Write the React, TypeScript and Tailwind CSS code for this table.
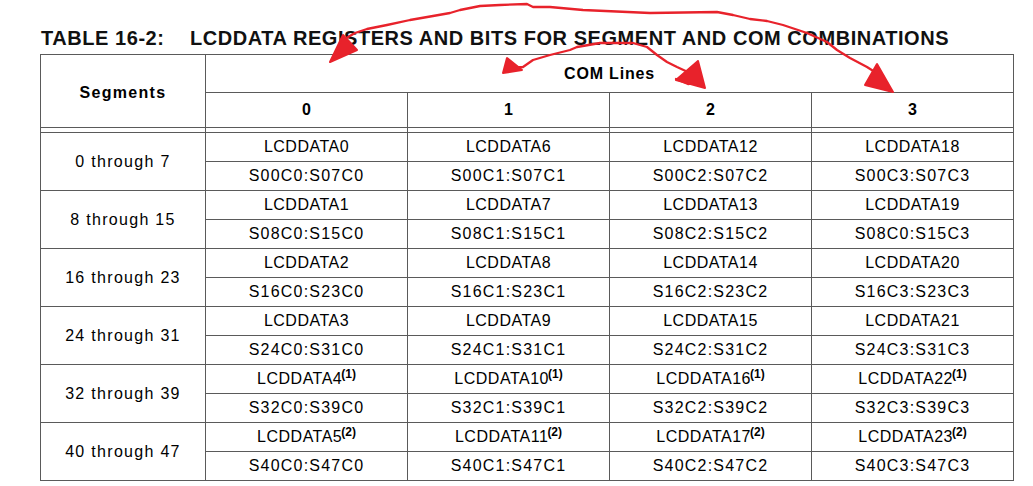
import React from 'react';

const groups = [
  { seg: '0 through 7', regs: ['LCDDATA0', 'LCDDATA6', 'LCDDATA12', 'LCDDATA18'], bits: ['S00C0:S07C0', 'S00C1:S07C1', 'S00C2:S07C2', 'S00C3:S07C3'] },
  { seg: '8 through 15', regs: ['LCDDATA1', 'LCDDATA7', 'LCDDATA13', 'LCDDATA19'], bits: ['S08C0:S15C0', 'S08C1:S15C1', 'S08C2:S15C2', 'S08C0:S15C3'] },
  { seg: '16 through 23', regs: ['LCDDATA2', 'LCDDATA8', 'LCDDATA14', 'LCDDATA20'], bits: ['S16C0:S23C0', 'S16C1:S23C1', 'S16C2:S23C2', 'S16C3:S23C3'] },
  { seg: '24 through 31', regs: ['LCDDATA3', 'LCDDATA9', 'LCDDATA15', 'LCDDATA21'], bits: ['S24C0:S31C0', 'S24C1:S31C1', 'S24C2:S31C2', 'S24C3:S31C3'] },
  { seg: '32 through 39', regs: ['LCDDATA4', 'LCDDATA10', 'LCDDATA16', 'LCDDATA22'], bits: ['S32C0:S39C0', 'S32C1:S39C1', 'S32C2:S39C2', 'S32C3:S39C3'], note: '(1)' },
  { seg: '40 through 47', regs: ['LCDDATA5', 'LCDDATA11', 'LCDDATA17', 'LCDDATA23'], bits: ['S40C0:S47C0', 'S40C1:S47C1', 'S40C2:S47C2', 'S40C3:S47C3'], note: '(2)' },
];

const cell = 'flex items-center justify-center border-b border-[#5a5a5a]';

// hand-drawn red arrows over the table
const Scribbles: React.FC = () => (
  <svg className="pointer-events-none absolute left-0 top-0" width="1033" height="486" viewBox="0 0 1033 486">
    <g stroke="#e8222b" strokeWidth="2.3" fill="none" strokeLinecap="round" strokeLinejoin="round">
      <polyline points="333,58 343,40 355,33 367,29 387,25 410,20 433,16 450,13 460,10 480,6 500,5 527,4 533,7 550,7 583,10 650,13 717,12 733,15 750,19 767,21 783,25 807,33 827,42 837,50 850,58 867,67 878,74" />
      <polyline points="506,68 523,67 533,60 550,55 570,50 577,47 600,43 633,43 647,47 657,55 667,62 677,67 690,73 700,80" />
      <polyline points="676,79 688,84 700,82" />
    </g>
    <g fill="#e8222b" stroke="#e8222b" strokeWidth="2" strokeLinejoin="round">
      <polygon points="330,62 343,35 357,50" />
      <polygon points="507,58 503,73 522,70" />
      <polygon points="698,61 676,80 705,88" />
      <polygon points="877,64 865,85 893,92" />
    </g>
  </svg>
);

export default function App() {
  return (
    <div className="relative h-[486px] w-[1033px] overflow-hidden bg-white pt-[26px] font-['Liberation_Sans',Arial,sans-serif] text-black">
      <h1 className="ml-[41px] flex h-6 items-center text-[20px] font-bold leading-6 tracking-[0.55px] text-[#111]">
        <span className="w-[149px]">TABLE 16-2:</span>
        <span>LCDDATA REGISTERS AND BITS FOR SEGMENT AND COM COMBINATIONS</span>
      </h1>

      <div className="ml-[40px] mt-1 w-[974px] border-x border-t border-[#5a5a5a] text-[16px]">
        {/* header */}
        <div className="grid grid-cols-[165px_202px_202px_202px_201px]">
          <div className={`${cell} row-span-2 border-r pt-1 font-bold tracking-[1.3px]`}>Segments</div>
          <div className={`${cell} col-span-4 h-[38px] font-bold tracking-[0.8px]`}>COM Lines</div>
          {['0', '1', '2', '3'].map((n, i) => (
            <div key={n} className={`${cell} h-[35px] font-bold ${i < 3 ? 'border-r' : ''}`}>{n}</div>
          ))}
          {[0, 1, 2, 3, 4].map((i) => (
            <div key={i} className={`h-[5px] border-b border-[#5a5a5a] ${i < 4 ? 'border-r' : ''}`} />
          ))}
        </div>

        {/* body */}
        <div className="grid grid-cols-[165px_202px_202px_202px_201px]">
          {groups.map((g) => (
            <React.Fragment key={g.seg}>
              <div className={`${cell} row-span-2 border-r tracking-[1.3px]`}>{g.seg}</div>
              {g.regs.map((r, i) => (
                <div key={r} className={`${cell} h-[29px] tracking-[0.5px] ${i < 3 ? 'border-r' : ''}`}>
                  <span>
                    {r}
                    {g.note && <sup className="-ml-px text-[12px] font-bold tracking-normal">{g.note}</sup>}
                  </span>
                </div>
              ))}
              {g.bits.map((b, i) => (
                <div key={b + i} className={`${cell} h-[29px] tracking-[1.2px] ${i < 3 ? 'border-r' : ''}`}>{b}</div>
              ))}
            </React.Fragment>
          ))}
        </div>
      </div>

      <Scribbles />
    </div>
  );
}
